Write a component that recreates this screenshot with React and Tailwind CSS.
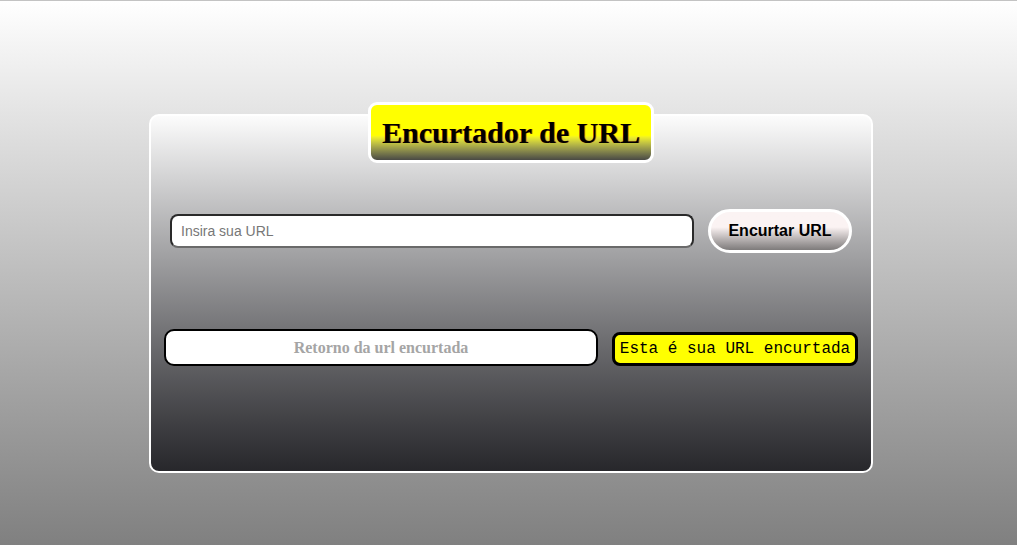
import React from 'react';

export default function App() {
  return (
    <div className="min-h-[545px] h-[545px] w-full border-t border-[#c3c3c3] bg-gradient-to-b from-white to-[#808080] flex justify-center pl-[5px]">
      <div className="mt-[113px] w-[724px] h-[359px] rounded-[10px] border-2 border-white bg-gradient-to-b from-[#fcfcfc] to-[#27272b] flex flex-col items-center">
        {/* Title */}
        <div className="-mt-[14px] w-[286px] h-[61px] rounded-[9px] border-[3px] border-white bg-gradient-to-b from-[#ffff00] from-55% to-[#4a4a44] flex items-center justify-center">
          <h1 className="text-[30px] font-bold text-black [text-shadow:1px_0_0_rgba(200,0,0,0.6)]" style={{ fontFamily: '"Liberation Serif", "Times New Roman", serif' }}>
            Encurtador de URL
          </h1>
        </div>

        {/* Input row */}
        <div className="mt-[46px] w-full px-[19px] flex items-center gap-[14px]">
          <input
            type="text"
            placeholder="Insira sua URL"
            className="flex-1 h-[34px] rounded-[8px] border-2 border-[#2a2a2a] border-b-[#6a6a6a] bg-white px-[9px] text-[14px] text-black placeholder:text-[#777] outline-none"
            style={{ fontFamily: '"Liberation Sans", Arial, sans-serif' }}
          />
          <button
            className="w-[144px] h-[44px] rounded-full border-[3px] border-white bg-gradient-to-b from-[#fbf3f3] from-40% to-[#7e7b7b] text-[16px] font-bold text-black"
            style={{ fontFamily: '"Liberation Sans", Arial, sans-serif' }}
          >
            Encurtar URL
          </button>
        </div>

        {/* Output row */}
        <div className="mt-[76px] w-full px-[13px] flex items-center gap-[14px]">
          <div
            className="flex-1 h-[37px] rounded-[10px] border-2 border-black bg-white flex items-center justify-center text-[16px] font-bold text-[#a5a5a5]"
            style={{ fontFamily: '"Liberation Serif", "Times New Roman", serif' }}
          >
            Retorno da url encurtada
          </div>
          <div
            className="mt-[3px] w-[246px] h-[34px] rounded-[8px] border-[3px] border-black bg-[#ffff00] flex items-center justify-center text-[16px] text-black"
            style={{ fontFamily: '"Liberation Mono", "Courier New", monospace' }}
          >
            Esta é sua URL encurtada
          </div>
        </div>
      </div>
    </div>
  );
}
